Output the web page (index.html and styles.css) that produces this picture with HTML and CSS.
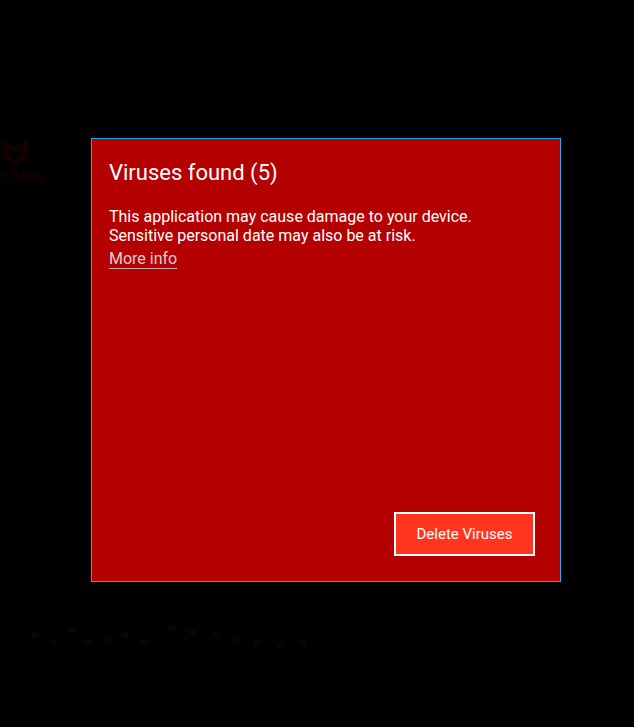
FILE: index.html
```html
<!DOCTYPE html>
<html lang="en">
<head>
<meta charset="utf-8">
<title>Viruses found</title>
<link rel="stylesheet" href="styles.css">
</head>
<body>
  <div class="page">
    <header class="brand">
      <svg class="brand-mark" width="30" height="28" viewBox="0 0 30 28" aria-hidden="true">
        <path d="M3 2 L15 8 L27 2 L27 21 L15 27 L3 21 Z M8 10 L8 18 L15 22 L22 18 L22 10 L15 14 Z" fill="#140000" fill-rule="evenodd"/>
      </svg>
      <span class="brand-name">cAfee</span>
    </header>

    <section class="score">
      <svg width="634" height="130" viewBox="0 0 634 130" aria-hidden="true">
        <g stroke="#050505" stroke-width="1" fill="none">
          <line x1="0" y1="9" x2="634" y2="9"/>
          <line x1="0" y1="33" x2="475" y2="33"/>
          <line x1="0" y1="43" x2="475" y2="43"/>
          <line x1="0" y1="53" x2="475" y2="53"/>
          <line x1="0" y1="63" x2="475" y2="63"/>
          <line x1="0" y1="108" x2="475" y2="108"/>
          <line x1="0" y1="118" x2="475" y2="118"/>
        </g>
        <g fill="#060606">
          <ellipse cx="35" cy="38" rx="4" ry="3"/>
          <ellipse cx="53" cy="45" rx="4" ry="3"/>
          <ellipse cx="71" cy="33" rx="4" ry="3"/>
          <ellipse cx="89" cy="45" rx="4" ry="3"/>
          <ellipse cx="107" cy="42" rx="4" ry="3"/>
          <ellipse cx="125" cy="38" rx="4" ry="3"/>
          <ellipse cx="143" cy="45" rx="4" ry="3"/>
          <ellipse cx="172" cy="31" rx="4" ry="3"/>
          <ellipse cx="193" cy="35" rx="4" ry="3"/>
          <ellipse cx="215" cy="38" rx="4" ry="3"/>
          <ellipse cx="237" cy="42" rx="4" ry="3"/>
          <ellipse cx="258" cy="45" rx="4" ry="3"/>
          <ellipse cx="280" cy="48" rx="4" ry="3"/>
          <ellipse cx="302" cy="45" rx="4" ry="3"/>
        </g>
      </svg>
    </section>
  </div>

  <div class="dialog" role="alertdialog" aria-labelledby="dlg-title">
    <h1 class="dialog-title" id="dlg-title">Viruses found (5)</h1>
    <p class="dialog-text">This application may cause damage to your device.<br>Sensitive personal date may also be at risk.</p>
    <a class="dialog-link" href="#">More info</a>
    <div class="dialog-actions">
      <button class="btn-delete" type="button">Delete Viruses</button>
    </div>
  </div>
</body>
</html>
```

FILE: styles.css
```css
html, body {
  margin: 0;
  padding: 0;
  background: #000;
  height: 100%;
}

body {
  font-family: Roboto, "Liberation Sans", Arial, sans-serif;
  color: #fff;
  overflow: hidden;
}

.page {
  width: 634px;
  height: 727px;
  display: flex;
  flex-direction: column;
}

.brand {
  margin-top: 138px;
  display: flex;
  flex-direction: column;
  align-items: flex-start;
}

.brand-mark {
  display: block;
}

.brand-name {
  font-size: 17px;
  font-weight: 700;
  color: #120000;
  line-height: 20px;
}

.score {
  margin-top: auto;
  height: 130px;
}

.score svg {
  display: block;
}

/* modal overlay */
.dialog {
  position: absolute;
  left: 91px;
  top: 138px;
  width: 434px;
  height: 408px;
  padding: 17px;
  background: #b50000;
  border: 1px solid #2aa6ea;
  display: flex;
  flex-direction: column;
  align-items: flex-start;
}

.dialog-title {
  margin: 2px 0 0 0;
  font-size: 22px;
  font-weight: 400;
  line-height: 30px;
}

.dialog-text {
  margin: 19px 0 0 0;
  font-size: 16px;
  line-height: 19px;
}

.dialog-link {
  margin-top: 4px;
  font-size: 16px;
  line-height: 19px;
  color: #e0d0d0;
  text-decoration: none;
  border-bottom: 1px solid #c8b0b0;
}

.dialog-actions {
  margin-top: auto;
  align-self: stretch;
  display: flex;
  justify-content: flex-end;
  padding-right: 8px;
  padding-bottom: 8px;
}

.btn-delete {
  width: 141px;
  height: 44px;
  background: #ff3520;
  border: 2px solid #fff;
  color: #fff;
  font-family: Roboto, "Liberation Sans", Arial, sans-serif;
  font-size: 15px;
  cursor: pointer;
  padding: 0;
}
```
